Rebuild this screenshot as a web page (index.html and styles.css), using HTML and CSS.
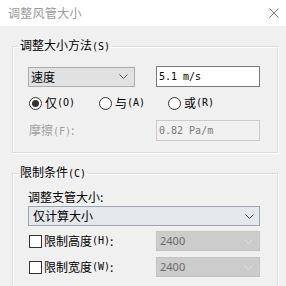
FILE: index.html
```html
<!DOCTYPE html>
<html lang="zh-CN">
<head>
    <meta charset="UTF-8">
    <title>调整风管大小</title>
    <link rel="stylesheet" href="styles.css">
</head>
<body>
    <div class="titlebar">
        <span class="title">调整风管大小</span>
        <svg class="close" width="10" height="10" viewBox="0 0 10 10">
            <path d="M0.5 0.5L9.5 9.5M9.5 0.5L0.5 9.5" stroke="#808080" stroke-width="1" fill="none"/>
        </svg>
    </div>

    <div class="dialog">
        <!-- Sizing method -->
        <fieldset class="group method">
            <legend>调整大小方法<span class="key">(S)</span></legend>
            <div class="row first">
                <div class="select">
                    <span>速度</span>
                    <svg width="9" height="5" viewBox="0 0 9 5"><path d="M0.5 0.5L4.5 4.5L8.5 0.5" stroke="#555" fill="none"/></svg>
                </div>
                <input class="field" type="text" value="5.1 m/s">
            </div>
            <div class="radios">
                <label class="radio"><span class="dot checked"></span>仅<span class="key">(O)</span></label>
                <label class="radio"><span class="dot"></span>与<span class="key">(A)</span></label>
                <label class="radio"><span class="dot"></span>或<span class="key">(R)</span></label>
            </div>
            <div class="row third">
                <span class="label disabled">摩擦<span class="key">(F)</span>:</span>
                <input class="field" type="text" value="0.82 Pa/m" disabled>
            </div>
        </fieldset>

        <!-- Limits -->
        <fieldset class="group limits">
            <legend>限制条件<span class="key">(C)</span></legend>
            <div class="label">调整支管大小:</div>
            <div class="select wide">
                <span>仅计算大小</span>
                <svg width="9" height="5" viewBox="0 0 9 5"><path d="M0.5 0.5L4.5 4.5L8.5 0.5" stroke="#444" fill="none"/></svg>
            </div>
            <div class="row check-row">
                <label class="check"><span class="box"></span>限制高度<span class="key">(H)</span>:</label>
                <div class="select off">
                    <span>2400</span>
                    <svg width="9" height="5" viewBox="0 0 9 5"><path d="M0.5 0.5L4.5 4.5L8.5 0.5" stroke="#e0e0e0" fill="none"/></svg>
                </div>
            </div>
            <div class="row check-row last">
                <label class="check"><span class="box"></span>限制宽度<span class="key">(W)</span>:</label>
                <div class="select off">
                    <span>2400</span>
                    <svg width="9" height="5" viewBox="0 0 9 5"><path d="M0.5 0.5L4.5 4.5L8.5 0.5" stroke="#e0e0e0" fill="none"/></svg>
                </div>
            </div>
        </fieldset>
    </div>
</body>
</html>
```

FILE: styles.css
```css
/* General */
body {
    margin: 0;
    width: 286px;
    height: 286px;
    overflow: hidden;
    background-color: #f0f0f0;
    font-family: "Noto Sans CJK SC", sans-serif;
    font-size: 12px;
    line-height: 16px;
    color: #000;
}

.key {
    font-family: "DejaVu Sans Mono", monospace;
    font-size: 10px;
}

/* Title bar */
.titlebar {
    height: 26px;
    display: flex;
    align-items: center;
    justify-content: space-between;
    padding: 0 7px 0 8px;
    background-color: #fff;
}

.title {
    color: #999;
    font-size: 12px;
    letter-spacing: 0.3px;
}

/* Dialog body */
.dialog {
    padding: 0 8px 0 12px;
}

.group {
    margin: 11px 0 0;
    padding: 11px 17px 11px 15px;
    border: 1px solid #dcdcdc;
    box-shadow: 1px 1px 0 #fff, inset 1px 1px 0 #fff;
}

.group legend {
    margin-left: -10px;
    padding: 0 2px;
    line-height: 16px;
}

.limits {
    padding-top: 7px;
    padding-bottom: 10px;
}

.row {
    display: grid;
    grid-template-columns: 107px 104px;
    column-gap: 21px;
    align-items: center;
}

.row.first {
    height: 21px;
}

.row.third {
    margin-top: 8px;
    height: 21px;
}

.label.disabled {
    color: #a0a0a0;
    padding-left: 1px;
}

/* Inputs */
.field {
    box-sizing: border-box;
    width: 104px;
    height: 21px;
    margin: 0;
    padding: 0 2px;
    border: 1px solid #7a7a7a;
    background-color: #fff;
    font-family: "DejaVu Sans Mono", monospace;
    font-size: 10px;
    color: #000;
    outline: none;
}

.field:disabled {
    border-color: #cccccc;
    background-color: #f0f0f0;
    color: #7a7a7a;
}

/* Drop-downs */
.select {
    box-sizing: border-box;
    height: 20px;
    display: flex;
    align-items: center;
    justify-content: space-between;
    padding: 0 6px 0 2px;
    border: 1px solid #adadad;
    background-color: #e1e1e1;
}

.select.wide {
    margin-top: 1px;
    padding: 0 5px 0 4px;
    border-color: #9aa6b2;
    background-color: #e4e8ec;
}

.select.off {
    height: 20px;
    padding: 0 6px 0 3px;
    border-color: #c4c4c4;
    background-color: #cccccc;
    font-family: "Noto Sans", sans-serif;
    font-size: 11px;
    color: #6a6a6a;
}

/* Radio buttons */
.radios {
    margin-top: 7px;
    height: 18px;
    display: grid;
    grid-template-columns: 70px 69px auto;
    align-items: center;
    padding-left: 1px;
}

.radio, .check {
    display: flex;
    align-items: center;
}

.dot {
    box-sizing: border-box;
    width: 13px;
    height: 13px;
    margin-right: 3px;
    border: 1px solid #333;
    border-radius: 50%;
    background-color: #fff;
    display: flex;
    align-items: center;
    justify-content: center;
}

.dot.checked::after {
    content: "";
    width: 7px;
    height: 7px;
    border-radius: 50%;
    background-color: #333;
}

/* Check boxes */
.check-row {
    margin-top: 5px;
}

.check-row.last {
    margin-top: 6px;
}

.box {
    box-sizing: border-box;
    width: 13px;
    height: 13px;
    margin: 0 2px 0 1px;
    border: 1px solid #333;
    background-color: #fff;
}
```
